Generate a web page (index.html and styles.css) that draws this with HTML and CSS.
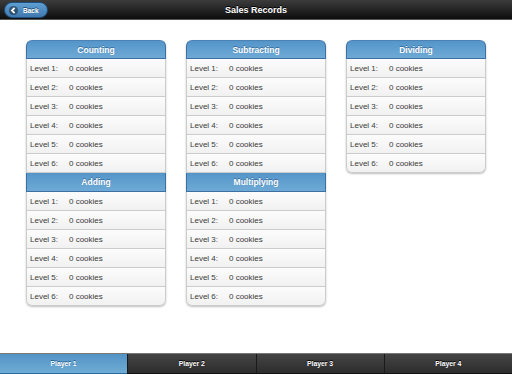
FILE: index.html
```html
<!DOCTYPE html>
<html lang="en">
<head>
  <meta charset="UTF-8" />
  <meta name="viewport" content="width=device-width, initial-scale=1.0" />
  <title>Sales Records</title>
  <link rel="stylesheet" href="styles.css">
</head>
<body>
  <div class="page">
    <div class="header">
      <a class="back-btn" href="#">
        <span class="back-icon">
          <svg width="9" height="9" viewBox="0 0 9 9"><path d="M5.6 1.8 L2.9 4.5 L5.6 7.2" fill="none" stroke="#fff" stroke-width="1.8"/></svg>
        </span>
        Back
      </a>
      <h1 class="title">Sales Records</h1>
    </div>

    <div class="content">
      <div class="column">
        <ul class="records">
          <li class="divider first">Counting</li>
          <li><span class="lvl">Level 1:</span>0 cookies</li>
          <li><span class="lvl">Level 2:</span>0 cookies</li>
          <li><span class="lvl">Level 3:</span>0 cookies</li>
          <li><span class="lvl">Level 4:</span>0 cookies</li>
          <li><span class="lvl">Level 5:</span>0 cookies</li>
          <li><span class="lvl">Level 6:</span>0 cookies</li>
          <li class="divider">Adding</li>
          <li><span class="lvl">Level 1:</span>0 cookies</li>
          <li><span class="lvl">Level 2:</span>0 cookies</li>
          <li><span class="lvl">Level 3:</span>0 cookies</li>
          <li><span class="lvl">Level 4:</span>0 cookies</li>
          <li><span class="lvl">Level 5:</span>0 cookies</li>
          <li class="last"><span class="lvl">Level 6:</span>0 cookies</li>
        </ul>
      </div>
      <div class="column">
        <ul class="records">
          <li class="divider first">Subtracting</li>
          <li><span class="lvl">Level 1:</span>0 cookies</li>
          <li><span class="lvl">Level 2:</span>0 cookies</li>
          <li><span class="lvl">Level 3:</span>0 cookies</li>
          <li><span class="lvl">Level 4:</span>0 cookies</li>
          <li><span class="lvl">Level 5:</span>0 cookies</li>
          <li><span class="lvl">Level 6:</span>0 cookies</li>
          <li class="divider">Multiplying</li>
          <li><span class="lvl">Level 1:</span>0 cookies</li>
          <li><span class="lvl">Level 2:</span>0 cookies</li>
          <li><span class="lvl">Level 3:</span>0 cookies</li>
          <li><span class="lvl">Level 4:</span>0 cookies</li>
          <li><span class="lvl">Level 5:</span>0 cookies</li>
          <li class="last"><span class="lvl">Level 6:</span>0 cookies</li>
        </ul>
      </div>
      <div class="column">
        <ul class="records">
          <li class="divider first">Dividing</li>
          <li><span class="lvl">Level 1:</span>0 cookies</li>
          <li><span class="lvl">Level 2:</span>0 cookies</li>
          <li><span class="lvl">Level 3:</span>0 cookies</li>
          <li><span class="lvl">Level 4:</span>0 cookies</li>
          <li><span class="lvl">Level 5:</span>0 cookies</li>
          <li class="last"><span class="lvl">Level 6:</span>0 cookies</li>
        </ul>
      </div>
    </div>

    <div class="footer">
      <a class="tab active" href="#">Player 1</a>
      <a class="tab" href="#">Player 2</a>
      <a class="tab" href="#">Player 3</a>
      <a class="tab" href="#">Player 4</a>
    </div>
  </div>
</body>
</html>
```

FILE: styles.css
```css
html, body {
  margin: 0;
  padding: 0;
  height: 100%;
}
body {
  font-family: "Liberation Sans", Arial, sans-serif;
  background: #fff;
  color: #333;
  overflow: hidden;
}
.page {
  display: flex;
  flex-direction: column;
  height: 374px;
}
/* top bar */
.header {
  height: 19px;
  border-bottom: 1px solid #555;
  background: linear-gradient(#3c3c3c, #0d0d0d);
  display: flex;
  align-items: center;
  justify-content: center;
  position: relative;
  flex: none;
}
.title {
  margin: 0;
  font-size: 9px;
  font-weight: bold;
  color: #fff;
  text-shadow: 0 -1px 0 #000;
}
.back-btn {
  position: absolute;
  left: 4px;
  top: 2px;
  width: 44px;
  height: 16px;
  box-sizing: border-box;
  border: 1px solid #1f4f7c;
  border-radius: 9px;
  background: linear-gradient(#5f9fd2, #3f78b0);
  color: #fff;
  font-size: 6.5px;
  font-weight: bold;
  text-decoration: none;
  text-shadow: 0 -1px 0 #224a70;
  display: flex;
  align-items: center;
  gap: 5px;
  padding-left: 4px;
}
.back-icon {
  width: 9px;
  height: 9px;
  border-radius: 50%;
  background: rgba(0, 0, 0, 0.4);
  display: flex;
}
/* lists */
.content {
  flex: 1;
  display: flex;
  gap: 20px;
  padding: 20px 0 0 26px;
  align-items: flex-start;
}
.column {
  width: 140px;
}
.records {
  list-style: none;
  margin: 0;
  padding: 0;
  border-radius: 6px;
  box-shadow: 0 1px 2px rgba(0, 0, 0, 0.25);
}
.records li {
  height: 18px;
  border: 1px solid #ccc;
  border-top: 0;
  background: linear-gradient(#fcfcfc, #f1f1f1);
  font-size: 8px;
  color: #3a3a3a;
  display: flex;
  align-items: center;
  padding-left: 3px;
}
.records li .lvl {
  width: 39px;
}
.records li.divider {
  justify-content: center;
  padding-left: 0;
  height: 18px;
  border: 1px solid #3d6fa0;
  border-top: 0;
  background: linear-gradient(#5495c9, #6eaad6);
  color: #fff;
  font-weight: bold;
  font-size: 8.5px;
  text-shadow: 0 -1px 0 #3a6d9d;
}
.records li.divider.first {
  border-top: 1px solid #4d82b5;
  height: 17px;
  border-radius: 6px 6px 0 0;
}
.records li.last {
  border-radius: 0 0 6px 6px;
}
/* tab bar */
.footer {
  flex: none;
  height: 20px;
  border-top: 1px solid #777;
  background: #111;
  display: flex;
}
.tab {
  flex: 1;
  display: flex;
  align-items: center;
  justify-content: center;
  color: #fff;
  text-decoration: none;
  font-size: 6.8px;
  font-weight: bold;
  text-shadow: 0 -1px 0 #000;
  background: linear-gradient(#444, #2d2d2d);
  border-left: 1px solid #1a1a1a;
  border-bottom: 1px solid #111;
}
.tab:first-child {
  border-left: 0;
}
.tab.active {
  background: linear-gradient(#5393c5, #6facd5);
  border-color: #2a6aa0;
  text-shadow: 0 -1px 0 #1f5c8d;
}
```
